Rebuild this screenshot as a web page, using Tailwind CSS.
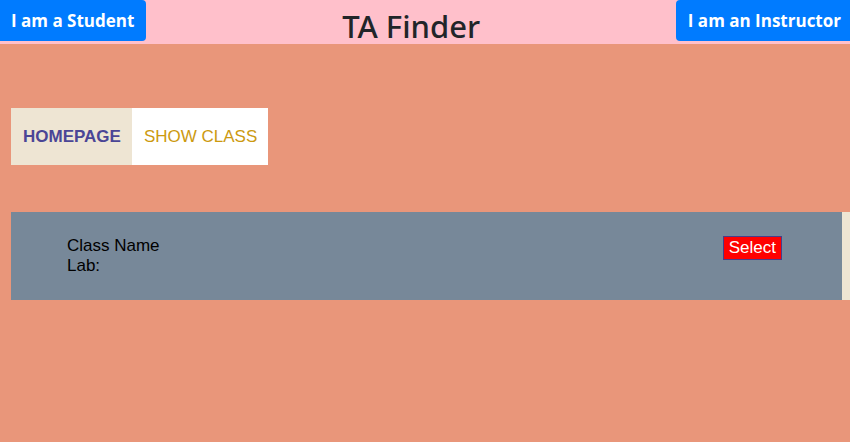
<!DOCTYPE html>
<html lang="en">
<head>
<meta charset="utf-8">
<meta name="viewport" content="width=device-width, initial-scale=1">
<title>TA Finder</title>
<script src="https://cdn.jsdelivr.net/npm/@tailwindcss/browser@4"></script>
</head>
<body class="min-h-screen bg-[#e9967a] font-['Liberation_Sans',Arial,sans-serif] text-[17px] leading-5 text-black">
  <header class="flex h-11 items-start justify-between bg-[#ffc0cb] font-['Open_Sans','Noto_Sans',sans-serif]">
    <button type="button" class="h-[41px] rounded-r bg-[#007bff] pr-3 pl-[11px] text-[17px] font-bold text-white">I am a Student</button>
    <h1 class="pt-2 font-['Noto_Sans',sans-serif] text-[31px] leading-9 font-medium text-[#212529]">TA Finder</h1>
    <button type="button" class="h-[41px] rounded-l bg-[#007bff] pr-[9px] pl-3 text-[17px] font-bold text-white">I am an Instructor</button>
  </header>
  <main class="pt-16 pl-[11px]">
    <nav class="flex h-[57px] w-fit bg-white">
      <a href="#" class="flex items-center bg-[#eee5d3] pr-[11px] pl-3 font-bold text-[#4b4696]">HOMEPAGE</a>
      <a href="#" class="flex items-center pr-[11px] pl-3 text-[#cc9a10]">SHOW CLASS</a>
    </nav>
    <section class="mt-[47px] bg-[#eee5d3] pr-2">
      <div class="flex h-[88px] items-start justify-between bg-[#778899] pt-6 pr-[60px] pl-14">
        <div>
          <p>Class Name</p>
          <p>Lab:</p>
        </div>
        <button type="button" class="h-6 border border-[#483d8b] bg-[#ff0000] px-[5px] text-white">Select</button>
      </div>
    </section>
  </main>
</body>
</html>
